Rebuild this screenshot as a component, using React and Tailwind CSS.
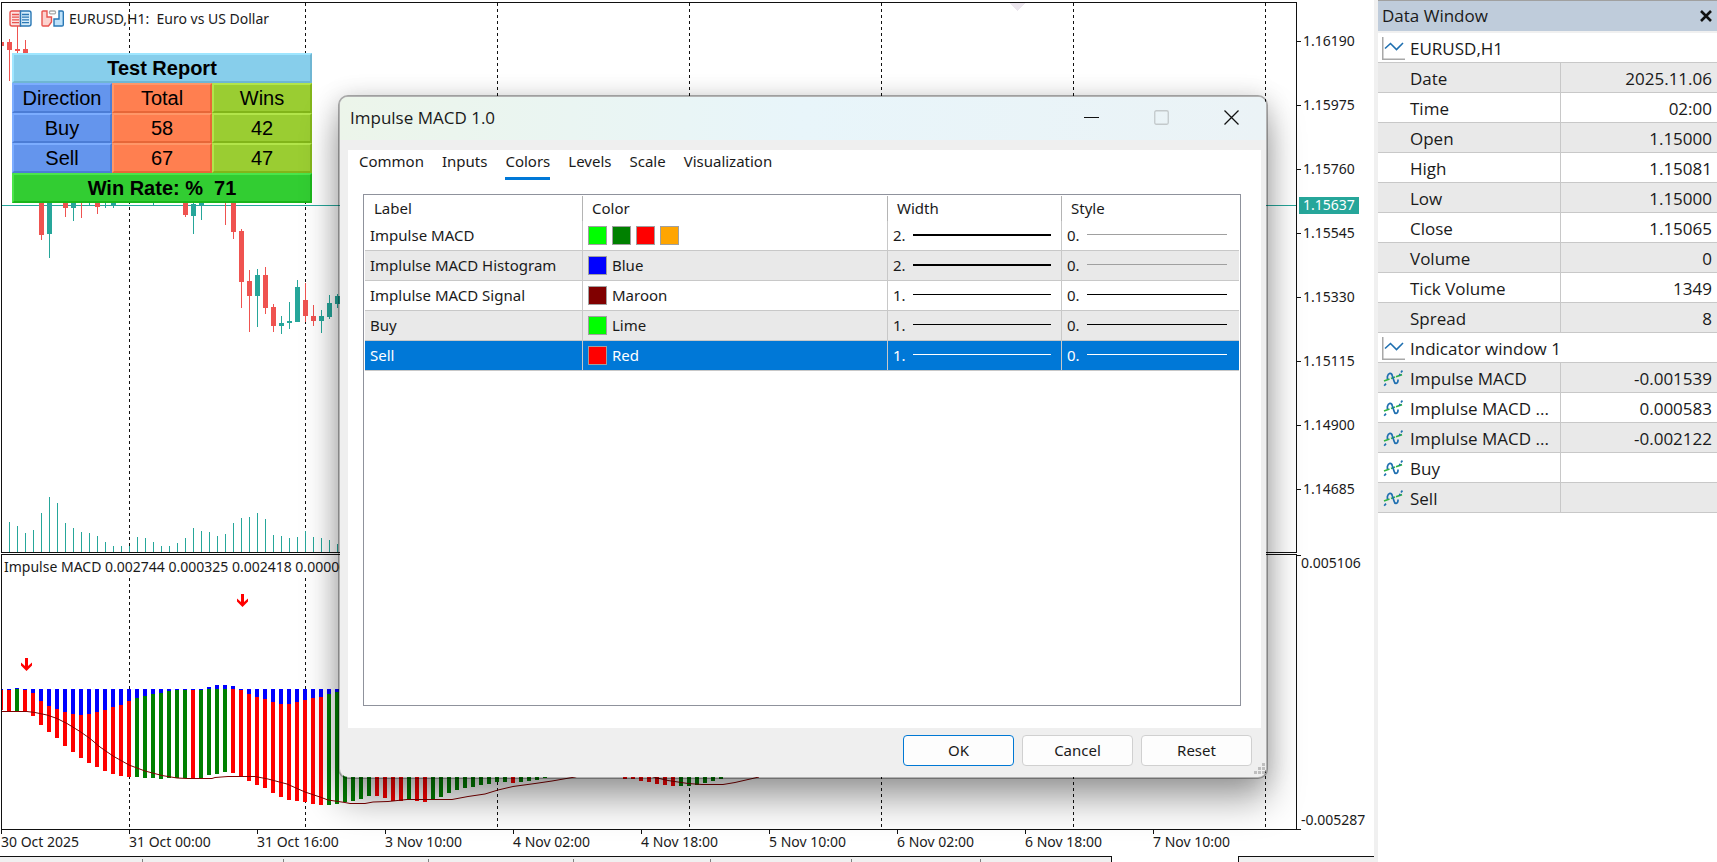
import React from "react";

const CHART_FONT = "font-['Noto_Sans',sans-serif] text-sm leading-4 text-[#1a1a1a]";

const RED = "#ef5350";
const TEAL = "#26a69a";

/* x index, colour, body top, body bottom, wick top, wick bottom */
const CANDLES = [
  [-1, RED, 42, 46, 42, 46],
  [0, RED, 42, 50, 39, 81],
  [1, RED, 49, 51, 26, 53],
  [2, RED, 49, 54, 40, 54],
  [4, RED, 195, 235, 195, 240],
  [5, TEAL, 195, 234, 195, 258],
  [7, RED, 195, 208, 195, 217],
  [8, TEAL, 195, 208, 195, 221],
  [9, RED, 195, 196, 195, 218],
  [10, TEAL, 195, 196, 195, 205],
  [11, RED, 195, 207, 195, 214],
  [12, TEAL, 195, 196, 195, 208],
  [13, TEAL, 195, 206, 195, 208],
  [18, TEAL, 195, 196, 195, 205],
  [22, RED, 195, 215, 195, 217],
  [23, TEAL, 204, 216, 195, 234],
  [24, TEAL, 195, 205, 195, 220],
  [27, RED, 195, 196, 195, 225],
  [28, RED, 195, 232, 195, 239],
  [29, RED, 231, 282, 229, 308],
  [30, RED, 281, 296, 270, 332],
  [31, TEAL, 275, 296, 269, 327],
  [32, RED, 275, 308, 267, 314],
  [33, RED, 307, 326, 304, 332],
  [34, TEAL, 323, 326, 316, 334],
  [35, TEAL, 321, 323, 302, 329],
  [36, TEAL, 287, 322, 280, 322],
  [37, RED, 300, 316, 283, 322],
  [38, RED, 316, 321, 305, 326],
  [39, TEAL, 316, 321, 310, 333],
  [40, TEAL, 303, 317, 295, 319],
  [41, TEAL, 296, 304, 294, 308],
];

const VOLUMES = [
  30, 26, 19, 22, 39, 55, 49, 29, 24, 20, 19, 16, 10, 6, 6, 6, 15, 14, 10, 6, 6, 9, 14, 24, 21, 20,
  16, 18, 29, 34, 35, 39, 33, 17, 16, 14, 15, 21, 15, 14, 12, 8,
];

/* x index, colour, bar bottom, histogram edge */
const MACD = [
  [-1, "r", 710, 690], [0, "r", 711, 690], [1, "g", 711, 688], [2, "r", 711, 690], [3, "r", 716, 693],
  [4, "r", 725, 701], [5, "r", 732, 706], [6, "r", 738, 709], [7, "r", 746, 712], [8, "r", 752, 714],
  [9, "r", 758, 715], [10, "r", 763, 714], [11, "r", 767, 712], [12, "r", 771, 710], [13, "r", 774, 707],
  [14, "r", 776, 705], [15, "r", 777, 701], [16, "g", 777, 698], [17, "g", 778, 696], [18, "g", 778, 694],
  [19, "g", 779, 693], [20, "g", 778, 691], [21, "g", 778, 690], [22, "g", 778, 690], [23, "r", 778, 690],
  [24, "g", 778, 690], [25, "g", 775, 687], [26, "g", 774, 685], [27, "g", 772, 685], [28, "r", 773, 686],
  [29, "r", 776, 690], [30, "r", 781, 694], [31, "r", 785, 697], [32, "r", 788, 699], [33, "r", 793, 702],
  [34, "r", 797, 704], [35, "r", 800, 704], [36, "r", 801, 702], [37, "r", 802, 700], [38, "r", 804, 698],
  [39, "r", 805, 697], [40, "g", 805, 694], [41, "g", 804, 692], [42, "g", 802, 692], [43, "g", 801, 692],
  [44, "g", 799, 692], [45, "g", 796, 692], [46, "r", 796, 692], [47, "r", 798, 692], [48, "r", 801, 692],
  [49, "r", 801, 692], [50, "g", 800, 692], [51, "r", 801, 692], [52, "r", 802, 692], [53, "g", 800, 692],
  [54, "g", 797, 692], [55, "g", 793, 692], [56, "g", 790, 692], [57, "g", 788, 692], [58, "g", 787, 692],
  [59, "g", 785, 692], [60, "g", 784, 692], [61, "g", 782, 692], [62, "g", 782, 692], [63, "r", 783, 692],
  [64, "g", 782, 692], [65, "g", 781, 692], [66, "g", 780, 692], [67, "g", 778, 692], [77, "r", 779, 692],
  [78, "r", 779, 692], [79, "r", 781, 692], [80, "r", 782, 692], [81, "r", 784, 692], [82, "r", 785, 692],
  [83, "r", 786, 692], [84, "g", 786, 692], [85, "g", 786, 692], [86, "g", 785, 692], [87, "g", 783, 692],
  [88, "g", 781, 692], [89, "g", 779, 692],
];

const SIGNAL =
  "M2 711.5H27L35 712.5L47 715L57 718.5L67 723.5L80 731.5L90 738.5L100 747L113 756L129 765L145 771L162 775.5L177 778L187 778.5H212L215 777.5L228 776.5H255L268 779L287 784L305 792L320 797L328 800L345 802.5L350 803.5H365L373 802L388 801.5L407 799.5H452L468 796.5L485 794L498 790L513 786.5L535 783.5L552 781L575 777L600 770L640 770L653 777L668 780.5L688 783.5L702 784.5H723L735 782.5L759 777";

const SEPARATORS = [129, 305, 497, 689, 881, 1073, 1265];

const PRICES = ["1.16190", "1.15975", "1.15760", "1.15545", "1.15330", "1.15115", "1.14900", "1.14685"];

const TIMES = [
  "30 Oct 2025", "31 Oct 00:00", "31 Oct 16:00", "3 Nov 10:00", "4 Nov 02:00",
  "4 Nov 18:00", "5 Nov 10:00", "6 Nov 02:00", "6 Nov 18:00", "7 Nov 10:00",
];

const CHART_TABS = [143, 141, 145, 145, 137, 141, 129];

function Separators({ from, to }) {
  return SEPARATORS.map((x) => (
    <line key={x} x1={x + 0.5} x2={x + 0.5} y1={from} y2={to} stroke="#111" strokeDasharray="3 3" />
  ));
}

function PricePlot() {
  return (
    <svg className="block h-full w-full" shapeRendering="crispEdges" aria-hidden="true">
      <g transform="translate(-2 -3)">
        <path d="M1009 3H1026L1017.5 11Z" fill="#ece6ee" />
        <Separators from={3} to={552} />
        <rect x="2" y="205" width="4000" height="1" fill={TEAL} />
        {VOLUMES.map((h, i) => (
          <rect key={i} x={9 + i * 8} y={552 - h} width="1" height={h} fill={TEAL} />
        ))}
        {CANDLES.map(([i, color, top, bottom, high, low]) => (
          <g key={i} fill={color}>
            <rect x={9 + i * 8} y={high} width="1" height={low - high} />
            <rect x={7 + i * 8} y={top} width="5" height={bottom - top} />
          </g>
        ))}
      </g>
    </svg>
  );
}

function Arrow({ x, y }) {
  return (
    <path
      transform={`translate(${x} ${y})`}
      d="M-1.5 0H1.5V8L5.5 4.5V7.5L0 13L-5.5 7.5V4.5L-1.5 8Z"
      fill="#ff0000"
    />
  );
}

function MacdPlot() {
  return (
    <svg className="block h-full w-full" aria-hidden="true">
      <g transform="translate(-2 -555)">
        <g shapeRendering="crispEdges">
          <Separators from={578} to={829} />
          {MACD.map(([i, c, bottom, edge]) => (
            <g key={i}>
              <rect x={7 + i * 8} y="689" width="4" height={bottom - 689} fill={c === "r" ? "#ff0000" : "#008000"} />
              <rect
                x={7 + i * 8}
                y={Math.min(edge, 689)}
                width="4"
                height={Math.abs(edge - 689)}
                fill="#0000ff"
              />
            </g>
          ))}
        </g>
        <path d={SIGNAL} fill="none" stroke="#800000" />
        <Arrow x={26.5} y={658} />
        <Arrow x={242.5} y={594} />
      </g>
    </svg>
  );
}

function ChartIcons() {
  return (
    <svg width="56" height="18" viewBox="0 0 56 18" aria-hidden="true">
      <path d="M11.5 1H3Q1 1 1 3V14Q1 16 3 16H11.5Z" fill="#fde3e1" stroke="#e8544f" strokeWidth="1.4" />
      <path d="M11.5 1H20Q22 1 22 3V14Q22 16 20 16H11.5Z" fill="#d6ecfa" stroke="#2a78b5" strokeWidth="1.4" />
      <path d="M3 4.5H10M3 7.2H10M3 9.9H10M3 12.6H10" stroke="#e8544f" strokeWidth="1.3" />
      <path d="M13 4.5H20M13 7.2H20M13 9.9H20M13 12.6H20" stroke="#2a78b5" strokeWidth="1.3" />
      <path d="M34 1H38V7H42.5V12L39.5 16H34Q33 16 33 15V2Q33 1 34 1Z" fill="#fcd3cf" stroke="#e8544f" strokeWidth="1.4" />
      <path d="M50 1H53Q54.3 1 54.3 2V15Q54.3 16 53 16H45V9H50Z" fill="#bfe2fa" stroke="#2a78b5" strokeWidth="1.4" />
      <rect x="40.5" y="1" width="6" height="2.8" rx="1" fill="#fff" stroke="#a9a9a9" strokeWidth="1.3" />
    </svg>
  );
}

const SKY = "border-2 bg-[#87ceeb] border-t-[#9fe6ff] border-l-[#9fe6ff] border-r-[#6fb6d3] border-b-[#6fb6d3]";
const BLUE = "border-2 bg-[#6495ed] border-t-[#7cadff] border-l-[#7cadff] border-r-[#4c7dd5] border-b-[#4c7dd5]";
const CORAL = "border-2 bg-[#ff7f50] border-t-[#ff9768] border-l-[#ff9768] border-r-[#e76738] border-b-[#e76738]";
const OLIVE = "border-2 bg-[#9acd32] border-t-[#b2e54a] border-l-[#b2e54a] border-r-[#82b51a] border-b-[#82b51a]";
const GREEN = "border-2 bg-[#32cd32] border-t-[#4ae54a] border-l-[#4ae54a] border-r-[#1ab51a] border-b-[#1ab51a]";

function TestReport() {
  return (
    <table className="absolute top-[53px] left-3 w-[300px] table-fixed border-separate border-spacing-0 text-center font-['Liberation_Sans',Arial,sans-serif] text-xl leading-[26px] text-black">
      <thead>
        <tr>
          <th colSpan={3} className={`p-0 font-bold ${SKY}`}>Test Report</th>
        </tr>
        <tr>
          <th className={`p-0 font-normal ${BLUE}`}>Direction</th>
          <th className={`p-0 font-normal ${CORAL}`}>Total</th>
          <th className={`p-0 font-normal ${OLIVE}`}>Wins</th>
        </tr>
      </thead>
      <tbody>
        <tr>
          <td className={`p-0 ${BLUE}`}>Buy</td>
          <td className={`p-0 ${CORAL}`}>58</td>
          <td className={`p-0 ${OLIVE}`}>42</td>
        </tr>
        <tr>
          <td className={`p-0 ${BLUE}`}>Sell</td>
          <td className={`p-0 ${CORAL}`}>67</td>
          <td className={`p-0 ${OLIVE}`}>47</td>
        </tr>
      </tbody>
      <tfoot>
        <tr>
          <td colSpan={3} className={`p-0 font-bold whitespace-pre ${GREEN}`}>{"Win Rate: %  71"}</td>
        </tr>
      </tfoot>
    </table>
  );
}

const DIALOG_TABS = ["Common", "Inputs", "Colors", "Levels", "Scale", "Visualization"];

const DIALOG_ROWS = [
  { label: "Impulse MACD", colors: ["#00ff00", "#008000", "#ff0000", "#ffa500"], name: "", width: 2 },
  { label: "Implulse MACD Histogram", colors: ["#0000ff"], name: "Blue", width: 2 },
  { label: "Implulse MACD Signal", colors: ["#800000"], name: "Maroon", width: 1 },
  { label: "Buy", colors: ["#00ff00"], name: "Lime", width: 1 },
  { label: "Sell", colors: ["#ff0000"], name: "Red", width: 1, selected: true },
];

function ColorsTable() {
  const cell = "h-[30px] border-b border-[#c8c8c8] pt-0 pb-0.5 pl-[5px] font-normal";
  const head = "h-[25px] border-[#b4b4b4] pt-0 pb-0.5 pl-[9px] text-left font-normal";
  return (
    <table className="w-full table-fixed border-separate border-spacing-0">
      <colgroup>
        <col className="w-[218px]" />
        <col />
        <col className="w-[174px]" />
        <col className="w-[177px]" />
      </colgroup>
      <thead>
        <tr>
          <th className={`${head} border-r`}>Label</th>
          <th className={`${head} border-r`}>Color</th>
          <th className={`${head} border-r`}>Width</th>
          <th className={head}>Style</th>
        </tr>
      </thead>
      <tbody>
        {DIALOG_ROWS.map((row, i) => {
          const ink = row.selected ? "bg-white" : "bg-black";
          const tone = row.selected ? "bg-[#0078d7] text-white" : i % 2 ? "bg-[#e9e9e9]" : "bg-white";
          return (
            <tr key={row.label} className={tone} aria-selected={!!row.selected}>
              <td className={`${cell} border-r`}>{row.label}</td>
              <td className={`${cell} border-r`}>
                <div className="flex items-center gap-[5px]">
                  {row.colors.map((c) => (
                    <span key={c} className="mt-0.5 size-[19px] border border-[#a0a0a0]" style={{ backgroundColor: c }} />
                  ))}
                  <span>{row.name}</span>
                </div>
              </td>
              <td className={`${cell} border-r pr-[10px]`}>
                <div className="flex items-center">
                  <span className="w-5">{row.width}.</span>
                  <span className={`flex-1 ${row.width === 2 ? "h-0.5" : "h-px"} ${ink}`} />
                </div>
              </td>
              <td className={`${cell} pr-3`}>
                <div className="flex items-center">
                  <span className="w-5">0.</span>
                  <span className={`h-px flex-1 ${row.width === 2 ? "bg-[#a0a0a0]" : ink}`} />
                </div>
              </td>
            </tr>
          );
        })}
      </tbody>
    </table>
  );
}

function PropertiesDialog() {
  const button = "h-[31px] w-[111px] rounded border bg-[#fdfdfd] pb-px";
  return (
    <div
      role="dialog"
      aria-label="Impulse MACD 1.0"
      className="absolute top-[95px] left-[338px] w-[930px] rounded-[10px] border-2 border-black/30 bg-[#efefef] bg-clip-padding font-['Noto_Sans',sans-serif] text-[15px] leading-5 text-[#1a1a1a] shadow-[0_22px_36px_rgba(0,0,0,0.34),0_2px_24px_rgba(0,0,0,0.16)]"
    >
      <header className="flex h-[43px] items-center rounded-t-lg bg-linear-to-r from-[#ecf5ea] via-[#e8f5fa] to-[#ebf3f6] pb-0.5 pl-[10px]">
        <h1 className="flex-1 font-['Open_Sans',sans-serif] text-[17px]">Impulse MACD 1.0</h1>
        <div className="flex gap-4 pr-2">
          <button type="button" aria-label="Minimize" className="grid h-10 w-[54px] place-items-center">
            <svg width="15" height="15"><path d="M0 7.5H15" stroke="#111" /></svg>
          </button>
          <button type="button" aria-label="Maximize" disabled className="grid h-10 w-[54px] place-items-center">
            <svg width="15" height="15"><rect x=".75" y=".75" width="13.5" height="13.5" rx="1.5" fill="none" stroke="#c3c9cb" strokeWidth="1.3" /></svg>
          </button>
          <button type="button" aria-label="Close" className="grid h-10 w-[54px] place-items-center">
            <svg width="15" height="15"><path d="M.5 .5L14.5 14.5M14.5 .5L.5 14.5" stroke="#111" strokeWidth="1.3" /></svg>
          </button>
        </div>
      </header>
      <div className="mt-[10px] mr-[5px] ml-2 flex h-[578px] flex-col bg-white pr-5 pb-[22px] pl-[15px]">
        <div role="tablist" className="-ml-1 flex h-11 items-start gap-[18px]">
          {DIALOG_TABS.map((t) => (
            <button
              key={t}
              type="button"
              role="tab"
              aria-selected={t === "Colors"}
              className={`h-[30px] border-b-[3px] pb-[5px] ${t === "Colors" ? "border-[#0078d7]" : "border-transparent"}`}
            >
              {t}
            </button>
          ))}
        </div>
        <div className="flex-1 border border-[#8f929c] p-px">
          <ColorsTable />
        </div>
      </div>
      <footer className="flex justify-end gap-0.5 pt-[7px] pb-[11px]">
        <div className="flex gap-2">
          <button type="button" className={`${button} border-[#0078d4]`}>OK</button>
          <button type="button" className={`${button} border-[#d0d0d0]`}>Cancel</button>
          <button type="button" className={`${button} border-[#d0d0d0]`}>Reset</button>
        </div>
        <svg className="-mb-2 self-end" width="12" height="11" fill="#bfbfbf" aria-hidden="true">
          <path d="M8 0h3v3h-3zM4 4h3v3h-3zM8 4h3v3h-3zM0 8h3v3h-3zM4 8h3v3h-3zM8 8h3v3h-3z" />
        </svg>
      </footer>
    </div>
  );
}

const QUOTE_ROWS = [
  ["Date", "2025.11.06"],
  ["Time", "02:00"],
  ["Open", "1.15000"],
  ["High", "1.15081"],
  ["Low", "1.15000"],
  ["Close", "1.15065"],
  ["Volume", "0"],
  ["Tick Volume", "1349"],
  ["Spread", "8"],
];

const INDICATOR_ROWS = [
  ["Impulse MACD", "-0.001539"],
  ["Implulse MACD ...", "0.000583"],
  ["Implulse MACD ...", "-0.002122"],
  ["Buy", ""],
  ["Sell", ""],
];

function ChartIcon() {
  return (
    <svg width="23" height="23" viewBox="0 0 23 23" fill="none" aria-hidden="true">
      <path d="M.75 0V22.25H23" stroke="#a8a8a8" strokeWidth="1.5" />
      <path d="M3 11.5L8.5 6.5L14.5 12.5L21 6" stroke="#1f6fb0" strokeWidth="1.6" />
    </svg>
  );
}

function IndicatorIcon() {
  return (
    <svg width="20" height="17" viewBox="0 0 20 17" fill="none" aria-hidden="true">
      <path d="M1 11L6.5 9M13 6.8L19 4.6M8 8.5L12 7" stroke="#2fb344" strokeWidth="1.7" />
      <path d="M1.2 15.8L3 13.6M4.4 9V6.5C5.2 3 8.4 2 9.4 6L11 11C11.8 14.5 14.8 14 15 10.5V9.5M16.6 5.5L17 3.8M18 2.4L19.4 .6" stroke="#1f6fb0" strokeWidth="1.7" />
    </svg>
  );
}

function SectionRow({ title }) {
  return (
    <tr className="bg-white">
      <th colSpan={2} className="h-[30px] border-b border-[#c8c8c8] px-0 pt-0.5 pb-0 text-left font-normal">
        <div className="flex items-center pl-1">
          <span className="w-7"><ChartIcon /></span>
          {title}
        </div>
      </th>
    </tr>
  );
}

function ValueRow({ label, value, shaded, icon }) {
  return (
    <tr className={shaded ? "bg-[#e9e9e9]" : "bg-white"}>
      <th className="h-[30px] border-r border-b border-[#c8c8c8] px-0 pt-0.5 pb-0 text-left font-normal whitespace-nowrap">
        <div className="flex items-center pl-[5px]">
          <span className="w-[27px]">{icon && <IndicatorIcon />}</span>
          {label}
        </div>
      </th>
      <td className="h-[30px] border-b border-[#c8c8c8] pt-0.5 pr-[5px] pb-0 pl-0 text-right">{value}</td>
    </tr>
  );
}

function DataWindow() {
  return (
    <aside className="w-[339px] shrink-0 border-t border-[#a0a0a0] bg-white font-['Open_Sans',sans-serif] text-[17px] leading-6 text-[#1a1a1a]">
      <header className="flex h-8 items-center border-b-2 border-[#f0f0f0] bg-[#bfccdb] pr-[5px] pl-1">
        <h2 className="flex-1">Data Window</h2>
        <button type="button" aria-label="Close" className="grid size-3 place-items-center">
          <svg width="12" height="12"><path d="M1 1L11 11M11 1L1 11" stroke="#111" strokeWidth="2.6" /></svg>
        </button>
      </header>
      <table className="w-full table-fixed border-separate border-spacing-0">
        <colgroup>
          <col className="w-[183px]" />
          <col />
        </colgroup>
        <tbody>
          <SectionRow title="EURUSD,H1" />
          {QUOTE_ROWS.map(([l, v], i) => (
            <ValueRow key={l} label={l} value={v} shaded={i % 2 === 0} />
          ))}
          <SectionRow title="Indicator window 1" />
          {INDICATOR_ROWS.map(([l, v], i) => (
            <ValueRow key={i} label={l} value={v} shaded={i % 2 === 0} icon />
          ))}
        </tbody>
      </table>
    </aside>
  );
}

export default function App() {
  return (
    <main className="flex h-screen overflow-hidden bg-white">
      <section className={`relative flex min-w-0 flex-1 flex-col overflow-hidden ${CHART_FONT}`}>
        <div className="flex h-[553px] shrink-0">
          <div className="relative mt-0.5 ml-px min-w-0 flex-1 border border-[#111]">
            <PricePlot />
            <div className="absolute top-[7px] left-[7px] flex items-center gap-1 whitespace-pre">
              <ChartIcons />
              <h1>{"EURUSD,H1:  Euro vs US Dollar"}</h1>
            </div>
          </div>
          <div className="relative w-[77px] pt-[9px]">
            {PRICES.map((p) => (
              <div key={p} className="flex h-16 items-center gap-0.5">
                <span className="h-px w-1 bg-[#111]" />
                {p}
              </div>
            ))}
            <div className="absolute top-[197px] left-0.5 h-[17px] w-[60px] bg-[#26a69a] pl-1 text-white">1.15637</div>
          </div>
        </div>
        <div className="mt-px flex min-h-0 flex-1">
          <div className="relative ml-px min-w-0 flex-1 border border-[#111]">
            <MacdPlot />
            <p className="absolute top-1 left-0.5 whitespace-nowrap">
              Impulse MACD 0.002744 0.000325 0.002418 0.000000 0.000000
            </p>
          </div>
          <div className="flex w-[77px] flex-col justify-between">
            <div>
              <div className="h-0.5 w-1 border-b border-[#111]" />
              <div className="pl-1 leading-[14px]">0.005106</div>
            </div>
            <div>
              <div className="pl-1">-0.005287</div>
              <div className="h-0.5 w-1 border-b border-[#111]" />
            </div>
          </div>
        </div>
        <div className="flex h-[26px] shrink-0 pl-px">
          {TIMES.map((t) => (
            <div key={t} className="w-32 shrink-0">
              <div className="h-1 w-px bg-[#111]" />
              {t}
            </div>
          ))}
        </div>
        <div className="flex h-1.5 shrink-0">
          <div className="flex w-[1112px] border-t border-r border-[#111] bg-[#f0f0f0] pt-0.5">
            {CHART_TABS.map((w, i) => (
              <div key={i} className="shrink-0 border-r border-[#808080]" style={{ width: w }} />
            ))}
          </div>
          <div className="w-[126px]" />
          <div className="flex-1 border-t border-l border-[#111] bg-[#f0f0f0]" />
        </div>
        <TestReport />
        <PropertiesDialog />
      </section>
      <div className="w-1 shrink-0 bg-[#f0f0f0]" />
      <DataWindow />
    </main>
  );
}
